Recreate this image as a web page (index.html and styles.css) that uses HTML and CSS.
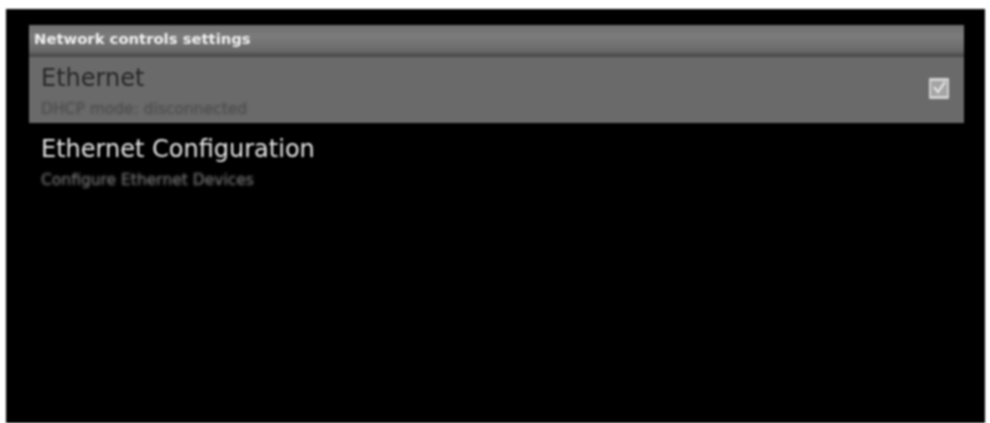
FILE: index.html
```html
<!DOCTYPE html>
<html lang="en">
<head>
  <meta charset="UTF-8">
  <title>Network controls settings</title>
  <link rel="stylesheet" href="styles.css">
</head>
<body>
  <div class="screen">
    <div class="settings-list">
      <!-- Section header -->
      <div class="section-header"><span>Network controls settings</span></div>

      <!-- Selected row -->
      <div class="row row-selected">
        <div class="row-text">
          <div class="row-title">Ethernet</div>
          <div class="row-summary">DHCP mode: disconnected</div>
        </div>
        <svg class="checkbox" width="22" height="23" viewBox="0 0 22 23">
          <rect x="1" y="1" width="20" height="21" rx="1" fill="#d2d2d2"/>
          <rect x="3" y="4" width="16" height="15" fill="#a4a4a4"/>
          <path d="M6 10l4 5 7-10" fill="none" stroke="#dedede" stroke-width="2.5"/>
        </svg>
      </div>

      <div class="row row-plain">
        <div class="row-text">
          <div class="row-title">Ethernet Configuration</div>
          <div class="row-summary">Configure Ethernet Devices</div>
        </div>
      </div>
    </div>
  </div>
</body>
</html>
```

FILE: styles.css
```css
html, body {
  height: 100%;
}

body {
  margin: 0;
  padding: 9px 5px 0 6px;
  box-sizing: border-box;
  background: #fff;
  overflow: hidden;
  font-family: "DejaVu Sans", sans-serif;
}

/* Black device screen */
.screen {
  height: 100%;
  background: #000;
  padding: 16px 21px 0 23px;
  box-sizing: border-box;
  filter: blur(0.8px);
}

.section-header {
  height: 32px;
  box-sizing: border-box;
  padding: 5px 0 0 5px;
  background: linear-gradient(#6f6f6f, #7c7c7c 35%, #6a6a6a 80%, #444);
  color: #f0f0f0;
  font-size: 14.8px;
  font-weight: 700;
  line-height: 18px;
}

.row {
  display: flex;
  align-items: center;
  justify-content: space-between;
  padding: 0 14px 0 12px;
}

.row-selected {
  height: 66px;
  box-sizing: border-box;
  background: #6a6a6a;
}

.row-plain .row-text {
  padding-top: 11px;
}

.row-selected .row-text {
  align-self: flex-start;
  padding-top: 6px;
}

.row-title {
  font-size: 24px;
  line-height: 31px;
  color: #e6e6e6;
}

.row-summary {
  font-size: 15.5px;
  line-height: 18px;
  margin-top: 6px;
  color: #8a8a8a;
  filter: blur(0.8px);
}

.row-selected .row-title {
  color: #262626;
}

.row-selected .row-summary {
  color: #464646;
}

.checkbox {
  margin-bottom: 4px;
  filter: blur(0.6px);
}
```
